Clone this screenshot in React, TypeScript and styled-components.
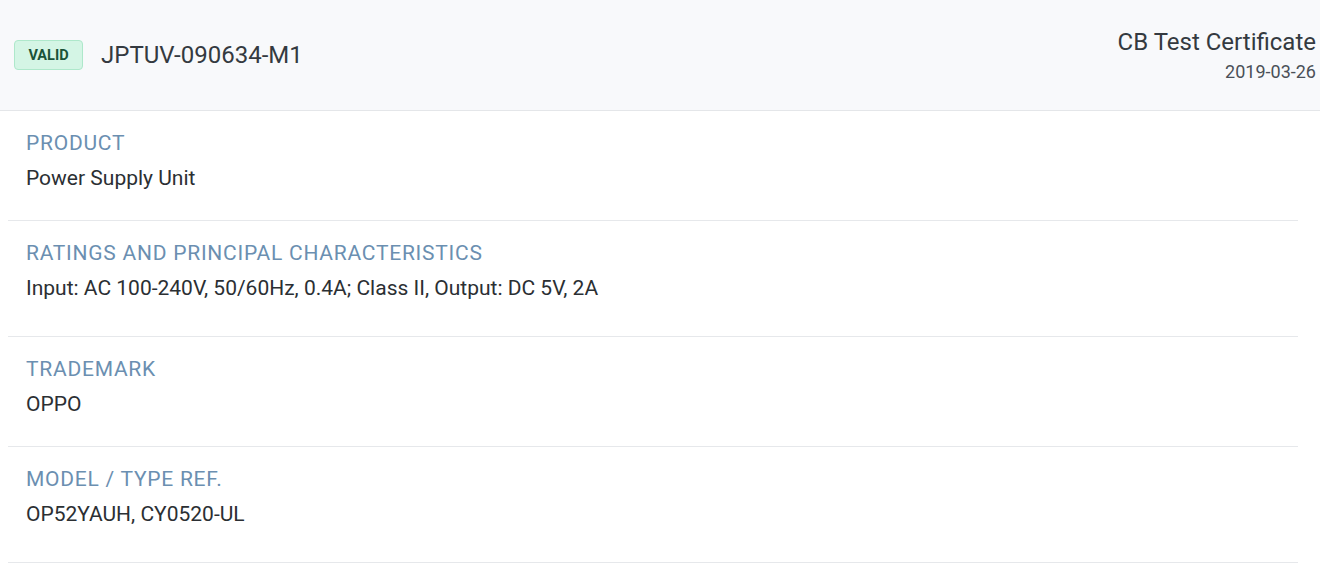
import React from 'react';
import styled, { createGlobalStyle } from 'styled-components';

const GlobalStyle = createGlobalStyle`
  body {
    margin: 0;
    background: #ffffff;
    font-family: Roboto, "Liberation Sans", sans-serif;
    color: #333a40;
  }
`;

const Header = styled.header`
  height: 111px;
  box-sizing: border-box;
  display: flex;
  align-items: center;
  justify-content: space-between;
  padding: 0 4px 0 14px;
  background: #f8f9fb;
  border-bottom: 1px solid #e4e6e9;
`;

const TitleGroup = styled.div`
  display: flex;
  align-items: center;
  gap: 18px;
`;

const Badge = styled.span`
  display: inline-flex;
  align-items: center;
  justify-content: center;
  width: 69px;
  height: 30px;
  box-sizing: border-box;
  border-radius: 4px;
  border: 1px solid #aee8cb;
  background: #d4f5e5;
  color: #1a5238;
  font-size: 14.5px;
  font-weight: 700;
`;

const CertNumber = styled.h1`
  margin: 0;
  font-size: 24px;
  font-weight: 400;
  color: #343a40;
`;

const Meta = styled.div`
  display: flex;
  flex-direction: column;
  align-items: flex-end;
  gap: 5px;
  margin-top: -1px;
`;

const CertType = styled.div`
  font-size: 24px;
  color: #343a40;
`;

const CertDate = styled.div`
  font-size: 18px;
  color: #4a5057;
`;

const Fields = styled.dl`
  margin: 0;
  padding: 0 22px 0 8px;
`;

const Field = styled.div<{ $tall?: boolean }>`
  padding: ${({ $tall }) => ($tall ? '19px 18px 35px' : '19px 18px 29px')};
  border-bottom: 1px solid #e6e8eb;
`;

const Label = styled.dt`
  font-size: 21px;
  line-height: 26px;
  letter-spacing: 0.75px;
  text-transform: uppercase;
  color: #6b8fb1;
`;

const Value = styled.dd`
  margin: 9px 0 0;
  font-size: 21px;
  line-height: 26px;
  color: #2b2f33;
`;

const fields = [
  { label: 'Product', value: 'Power Supply Unit' },
  {
    label: 'Ratings and principal characteristics',
    value: 'Input: AC 100-240V, 50/60Hz, 0.4A; Class II, Output: DC 5V, 2A',
  },
  { label: 'Trademark', value: 'OPPO' },
  { label: 'Model / Type ref.', value: 'OP52YAUH, CY0520-UL' },
];

export default function App() {
  return (
    <>
      <GlobalStyle />
      <Header>
        <TitleGroup>
          <Badge>VALID</Badge>
          <CertNumber>JPTUV-090634-M1</CertNumber>
        </TitleGroup>
        <Meta>
          <CertType>CB Test Certificate</CertType>
          <CertDate>2019-03-26</CertDate>
        </Meta>
      </Header>
      <Fields>
        {fields.map((f, i) => (
          <Field key={f.label} $tall={i % 2 === 1}>
            <Label>{f.label}</Label>
            <Value>{f.value}</Value>
          </Field>
        ))}
      </Fields>
    </>
  );
}
